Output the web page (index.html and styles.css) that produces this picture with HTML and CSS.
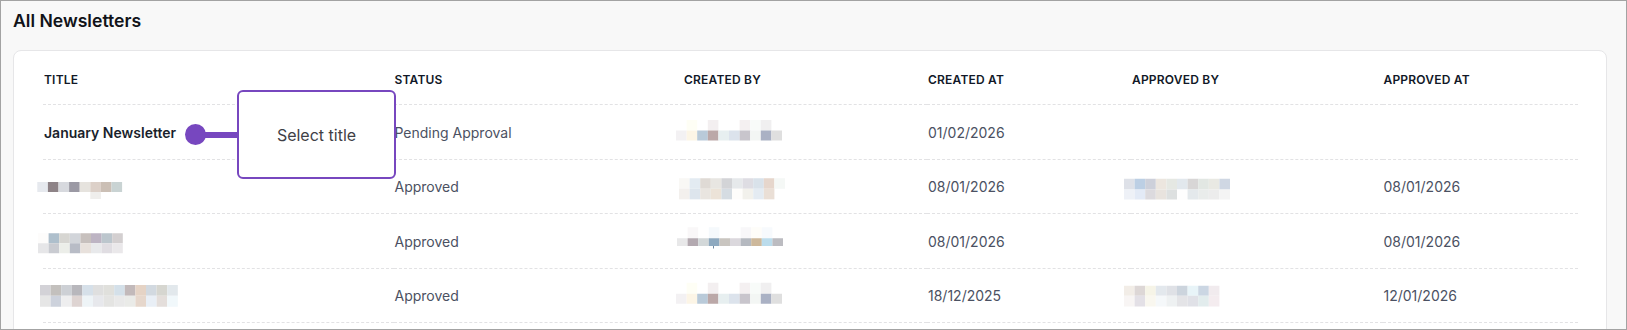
FILE: index.html
```html
<!DOCTYPE html>
<html lang="en">
<head>
<meta charset="utf-8">
<title>All Newsletters</title>
<link rel="stylesheet" href="styles.css">
</head>
<body>
<div class="frame">
  <h2 class="page-title">All Newsletters</h2>
  <section class="card">
    <table class="nl-table">
      <colgroup>
        <col class="col-title">
        <col class="col-status">
        <col class="col-created-by">
        <col class="col-created-at">
        <col class="col-approved-by">
        <col class="col-approved-at">
      </colgroup>
      <thead>
        <tr>
          <th>Title</th>
          <th>Status</th>
          <th>Created By</th>
          <th>Created At</th>
          <th>Approved By</th>
          <th>Approved At</th>
        </tr>
      </thead>
      <tbody>
        <tr>
          <td class="cell-title">January Newsletter</td>
          <td>Pending Approval</td>
          <td>
            <svg class="mosaic" width="115" height="30" viewBox="0 0 115 30" aria-hidden="true">
              <g>
                <rect x="11.6" y="2" width="10.6" height="10.5" fill="#fefef5"/>
                <rect x="32.8" y="2" width="10.6" height="10.5" fill="#f3eff0"/>
                <rect x="64.6" y="2" width="10.6" height="10.5" fill="#f4f0f1"/>
                <rect x="75.2" y="2" width="10.6" height="10.5" fill="#f8fbf9"/>
                <rect x="85.8" y="2" width="10.6" height="10.5" fill="#f0eff0"/>
              </g>
              <g>
                <rect x="1" y="12.5" width="10.6" height="10" fill="#f3f1f3"/>
                <rect x="11.6" y="12.5" width="10.6" height="10" fill="#fcf5e6"/>
                <rect x="22.2" y="12.5" width="10.6" height="10" fill="#b9cad9"/>
                <rect x="32.8" y="12.5" width="10.6" height="10" fill="#bba8a8"/>
                <rect x="43.4" y="12.5" width="10.6" height="10" fill="#e7eff0"/>
                <rect x="54" y="12.5" width="10.6" height="10" fill="#dce3ec"/>
                <rect x="64.6" y="12.5" width="10.6" height="10" fill="#c8c5cc"/>
                <rect x="75.2" y="12.5" width="10.6" height="10" fill="#f3f6f4"/>
                <rect x="85.8" y="12.5" width="10.6" height="10" fill="#aab1c4"/>
                <rect x="96.4" y="12.5" width="10.6" height="10" fill="#dfdfdf"/>
              </g>
            </svg>
          </td>
          <td>01/02/2026</td>
          <td></td>
          <td></td>
        </tr>
        <tr>
          <td>
            <svg class="mosaic" width="92" height="30" viewBox="0 0 92 30" aria-hidden="true">
              <rect x="2.3" y="10" width="10.6" height="10" fill="#e6e9ee"/>
              <rect x="12.9" y="10" width="10.6" height="10" fill="#8e8387"/>
              <rect x="23.5" y="10" width="10.6" height="10" fill="#d7d9de"/>
              <rect x="34.1" y="10" width="10.6" height="10" fill="#9b99a4"/>
              <rect x="44.7" y="10" width="10.6" height="10" fill="#e6e3de"/>
              <rect x="55.3" y="10" width="10.6" height="10" fill="#dcd0c8"/>
              <rect x="65.9" y="10" width="10.6" height="10" fill="#cbbfb5"/>
              <rect x="76.5" y="10" width="10.6" height="10" fill="#c9d3d3"/>
              <rect x="55.3" y="20" width="10.6" height="7" fill="#efeeec"/>
            </svg>
          </td>
          <td>Approved</td>
          <td>
            <svg class="mosaic" width="115" height="30" viewBox="0 0 115 30" aria-hidden="true">
              <g>
                <rect x="4" y="6.25" width="10.6" height="10.5" fill="#f9f8f5"/>
                <rect x="14.6" y="6.25" width="10.6" height="10.5" fill="#e3ebf2"/>
                <rect x="25.2" y="6.25" width="10.6" height="10.5" fill="#dfdad5"/>
                <rect x="35.8" y="6.25" width="10.6" height="10.5" fill="#e8e6e2"/>
                <rect x="46.4" y="6.25" width="10.6" height="10.5" fill="#d3d4d7"/>
                <rect x="57" y="6.25" width="10.6" height="10.5" fill="#e6e9eb"/>
                <rect x="67.6" y="6.25" width="10.6" height="10.5" fill="#dedde3"/>
                <rect x="78.2" y="6.25" width="10.6" height="10.5" fill="#d9e2ea"/>
                <rect x="88.8" y="6.25" width="10.6" height="10.5" fill="#e6d6cc"/>
                <rect x="99.4" y="6.25" width="10.6" height="10.5" fill="#f5f8f6"/>
              </g>
              <g>
                <rect x="4" y="16.75" width="10.6" height="10.6" fill="#f3f0ed"/>
                <rect x="14.6" y="16.75" width="10.6" height="10.6" fill="#dde5ed"/>
                <rect x="25.2" y="16.75" width="10.6" height="10.6" fill="#e9e5e0"/>
                <rect x="35.8" y="16.75" width="10.6" height="10.6" fill="#ece3d8"/>
                <rect x="46.4" y="16.75" width="10.6" height="10.6" fill="#d5dce2"/>
                <rect x="57" y="16.75" width="10.6" height="10.6" fill="#fefdfb"/>
                <rect x="67.6" y="16.75" width="10.6" height="10.6" fill="#f2f1ec"/>
                <rect x="78.2" y="16.75" width="10.6" height="10.6" fill="#e4ebf2"/>
                <rect x="88.8" y="16.75" width="10.6" height="10.6" fill="#eadfd6"/>
              </g>
            </svg>
          </td>
          <td>08/01/2026</td>
          <td>
            <svg class="mosaic" width="115" height="30" viewBox="0 0 115 30" aria-hidden="true">
              <g>
                <rect x="1" y="6.75" width="10.6" height="10.75" fill="#dee1e8"/>
                <rect x="11.6" y="6.75" width="10.6" height="10.75" fill="#bccfe4"/>
                <rect x="22.2" y="6.75" width="10.6" height="10.75" fill="#cdd0da"/>
                <rect x="32.8" y="6.75" width="10.6" height="10.75" fill="#ece6df"/>
                <rect x="43.4" y="6.75" width="10.6" height="10.75" fill="#e5e8e3"/>
                <rect x="54" y="6.75" width="10.6" height="10.75" fill="#e2e8ed"/>
                <rect x="64.6" y="6.75" width="10.6" height="10.75" fill="#d8d6d6"/>
                <rect x="75.2" y="6.75" width="10.6" height="10.75" fill="#e2e7e3"/>
                <rect x="85.8" y="6.75" width="10.6" height="10.75" fill="#e9e9e3"/>
                <rect x="96.4" y="6.75" width="10.6" height="10.75" fill="#cfd7e3"/>
              </g>
              <g>
                <rect x="1" y="17.5" width="10.6" height="10" fill="#eef1f7"/>
                <rect x="11.6" y="17.5" width="10.6" height="10" fill="#e3eaf6"/>
                <rect x="22.2" y="17.5" width="10.6" height="10" fill="#dcdade"/>
                <rect x="32.8" y="17.5" width="10.6" height="10" fill="#e8e3de"/>
                <rect x="43.4" y="17.5" width="10.6" height="10" fill="#dde0e0"/>
                <rect x="54" y="17.5" width="10.6" height="10" fill="#fefefe"/>
                <rect x="64.6" y="17.5" width="10.6" height="10" fill="#e4e9ec"/>
                <rect x="75.2" y="17.5" width="10.6" height="10" fill="#e9eceb"/>
                <rect x="85.8" y="17.5" width="10.6" height="10" fill="#ececec"/>
                <rect x="96.4" y="17.5" width="10.6" height="10" fill="#f4f4f4"/>
              </g>
            </svg>
          </td>
          <td>08/01/2026</td>
        </tr>
        <tr>
          <td>
            <svg class="mosaic" width="92" height="30" viewBox="0 0 92 30" aria-hidden="true">
              <g>
                <rect x="3" y="6.25" width="10.6" height="10" fill="#fdfcfb"/>
                <rect x="13.6" y="6.25" width="10.6" height="10" fill="#aebfcc"/>
                <rect x="24.2" y="6.25" width="10.6" height="10" fill="#d7d6d2"/>
                <rect x="34.8" y="6.25" width="10.6" height="10" fill="#d2d5da"/>
                <rect x="45.4" y="6.25" width="10.6" height="10" fill="#c7c0bd"/>
                <rect x="56" y="6.25" width="10.6" height="10" fill="#bdb4c3"/>
                <rect x="66.6" y="6.25" width="10.6" height="10" fill="#bcc6cd"/>
                <rect x="77.2" y="6.25" width="10.6" height="10" fill="#d3cfd0"/>
              </g>
              <g>
                <rect x="3" y="16.25" width="10.6" height="10" fill="#e6e6e8"/>
                <rect x="13.6" y="16.25" width="10.6" height="10" fill="#c9cbd1"/>
                <rect x="24.2" y="16.25" width="10.6" height="10" fill="#eceee9"/>
                <rect x="34.8" y="16.25" width="10.6" height="10" fill="#b8bcc6"/>
                <rect x="45.4" y="16.25" width="10.6" height="10" fill="#e8e1dc"/>
                <rect x="56" y="16.25" width="10.6" height="10" fill="#e8e9eb"/>
                <rect x="66.6" y="16.25" width="10.6" height="10" fill="#e0dde2"/>
                <rect x="77.2" y="16.25" width="10.6" height="10" fill="#eae8ea"/>
              </g>
            </svg>
          </td>
          <td>Approved</td>
          <td>
            <svg class="mosaic" width="115" height="30" viewBox="0 0 115 30" aria-hidden="true">
              <g>
                <rect x="12.6" y="0.25" width="10.6" height="11" fill="#f9f7f8"/>
                <rect x="33.8" y="0.25" width="10.6" height="11" fill="#f5f9fc"/>
                <rect x="65.6" y="0.25" width="10.6" height="11" fill="#f8f7f9"/>
                <rect x="76.2" y="0.25" width="10.6" height="11" fill="#fefdf9"/>
                <rect x="86.8" y="0.25" width="10.6" height="11" fill="#f7fafd"/>
              </g>
              <g>
                <rect x="2" y="11.25" width="10.6" height="7.75" fill="#e8e8e9"/>
                <rect x="12.6" y="11.25" width="10.6" height="7.75" fill="#b3a9b0"/>
                <rect x="23.2" y="11.25" width="10.6" height="7.75" fill="#d3d8d9"/>
                <rect x="33.8" y="11.25" width="10.6" height="7.75" fill="#8ea9bf"/>
                <rect x="44.4" y="11.25" width="10.6" height="7.75" fill="#c9c5c0"/>
                <rect x="55" y="11.25" width="10.6" height="7.75" fill="#dbd8dd"/>
                <rect x="65.6" y="11.25" width="10.6" height="7.75" fill="#b5b9c0"/>
                <rect x="76.2" y="11.25" width="10.6" height="7.75" fill="#cdb89b"/>
                <rect x="86.8" y="11.25" width="10.6" height="7.75" fill="#bbdcec"/>
                <rect x="97.4" y="11.25" width="10.6" height="7.75" fill="#bcbcc1"/>
                <rect x="38" y="19" width="1" height="2.5" fill="#6f8aa3"/>
              </g>
            </svg>
          </td>
          <td>08/01/2026</td>
          <td></td>
          <td>08/01/2026</td>
        </tr>
        <tr>
          <td>
            <svg class="mosaic" width="145" height="30" viewBox="0 0 145 30" aria-hidden="true">
              <g>
                <rect x="5" y="4" width="10.6" height="10.75" fill="#d3d2d7"/>
                <rect x="15.6" y="4" width="10.6" height="10.75" fill="#c3c0bd"/>
                <rect x="26.2" y="4" width="10.6" height="10.75" fill="#cdd0d5"/>
                <rect x="36.8" y="4" width="10.6" height="10.75" fill="#b8b7bc"/>
                <rect x="47.4" y="4" width="10.6" height="10.75" fill="#d6e0e9"/>
                <rect x="58" y="4" width="10.6" height="10.75" fill="#dfdfdf"/>
                <rect x="68.6" y="4" width="10.6" height="10.75" fill="#e0e0dc"/>
                <rect x="79.2" y="4" width="10.6" height="10.75" fill="#d4e0e9"/>
                <rect x="89.8" y="4" width="10.6" height="10.75" fill="#c2b9ba"/>
                <rect x="100.4" y="4" width="10.6" height="10.75" fill="#e5d3c5"/>
                <rect x="111" y="4" width="10.6" height="10.75" fill="#d2d9e0"/>
                <rect x="121.6" y="4" width="10.6" height="10.75" fill="#d6d6d0"/>
                <rect x="132.2" y="4" width="10.6" height="10.75" fill="#e2e8ec"/>
              </g>
              <g>
                <rect x="5" y="14.75" width="10.6" height="11" fill="#e6e6e6"/>
                <rect x="15.6" y="14.75" width="10.6" height="11" fill="#cdd2dc"/>
                <rect x="26.2" y="14.75" width="10.6" height="11" fill="#eeeeef"/>
                <rect x="36.8" y="14.75" width="10.6" height="11" fill="#ded4d2"/>
                <rect x="47.4" y="14.75" width="10.6" height="11" fill="#eef4f7"/>
                <rect x="58" y="14.75" width="10.6" height="11" fill="#e7e8ec"/>
                <rect x="68.6" y="14.75" width="10.6" height="11" fill="#e4e4e2"/>
                <rect x="79.2" y="14.75" width="10.6" height="11" fill="#e9e9e9"/>
                <rect x="89.8" y="14.75" width="10.6" height="11" fill="#eaebe8"/>
                <rect x="100.4" y="14.75" width="10.6" height="11" fill="#e6d7cc"/>
                <rect x="111" y="14.75" width="10.6" height="11" fill="#e9eff6"/>
                <rect x="121.6" y="14.75" width="10.6" height="11" fill="#e4dedb"/>
                <rect x="132.2" y="14.75" width="10.6" height="11" fill="#f1f8fb"/>
              </g>
            </svg>
          </td>
          <td>Approved</td>
          <td>
            <svg class="mosaic" width="115" height="30" viewBox="0 0 115 30" aria-hidden="true">
              <g>
                <rect x="11.6" y="1.75" width="10.6" height="11" fill="#fefef5"/>
                <rect x="32.8" y="1.75" width="10.6" height="11" fill="#f3eff0"/>
                <rect x="64.6" y="1.75" width="10.6" height="11" fill="#f4f0f1"/>
                <rect x="75.2" y="1.75" width="10.6" height="11" fill="#f8fbf9"/>
                <rect x="85.8" y="1.75" width="10.6" height="11" fill="#f0eff0"/>
              </g>
              <g>
                <rect x="1" y="12.75" width="10.6" height="10" fill="#f3f1f3"/>
                <rect x="11.6" y="12.75" width="10.6" height="10" fill="#fcf5e6"/>
                <rect x="22.2" y="12.75" width="10.6" height="10" fill="#b9cad9"/>
                <rect x="32.8" y="12.75" width="10.6" height="10" fill="#bba8a8"/>
                <rect x="43.4" y="12.75" width="10.6" height="10" fill="#e7eff0"/>
                <rect x="54" y="12.75" width="10.6" height="10" fill="#dce3ec"/>
                <rect x="64.6" y="12.75" width="10.6" height="10" fill="#c8c5cc"/>
                <rect x="75.2" y="12.75" width="10.6" height="10" fill="#f3f6f4"/>
                <rect x="85.8" y="12.75" width="10.6" height="10" fill="#aab1c4"/>
                <rect x="96.4" y="12.75" width="10.6" height="10" fill="#dfdfdf"/>
              </g>
            </svg>
          </td>
          <td>18/12/2025</td>
          <td>
            <svg class="mosaic" width="115" height="30" viewBox="0 0 115 30" aria-hidden="true">
              <g>
                <rect x="1" y="4.75" width="10.6" height="10" fill="#f2ede7"/>
                <rect x="11.6" y="4.75" width="10.6" height="10" fill="#ddd7d6"/>
                <rect x="22.2" y="4.75" width="10.6" height="10" fill="#f6f4e7"/>
                <rect x="32.8" y="4.75" width="10.6" height="10" fill="#e3e8ed"/>
                <rect x="43.4" y="4.75" width="10.6" height="10" fill="#dfe1e6"/>
                <rect x="54" y="4.75" width="10.6" height="10" fill="#ccd4dd"/>
                <rect x="64.6" y="4.75" width="10.6" height="10" fill="#e8f4f8"/>
                <rect x="75.2" y="4.75" width="10.6" height="10" fill="#cbd6e3"/>
                <rect x="85.8" y="4.75" width="10.6" height="10" fill="#f1ebee"/>
              </g>
              <g>
                <rect x="1" y="14.75" width="10.6" height="10.75" fill="#f8f5f4"/>
                <rect x="11.6" y="14.75" width="10.6" height="10.75" fill="#e3e0e6"/>
                <rect x="22.2" y="14.75" width="10.6" height="10.75" fill="#f9f7ef"/>
                <rect x="32.8" y="14.75" width="10.6" height="10.75" fill="#f5f8fa"/>
                <rect x="43.4" y="14.75" width="10.6" height="10.75" fill="#eef1f2"/>
                <rect x="54" y="14.75" width="10.6" height="10.75" fill="#e4e4e7"/>
                <rect x="64.6" y="14.75" width="10.6" height="10.75" fill="#e0e1e7"/>
                <rect x="75.2" y="14.75" width="10.6" height="10.75" fill="#e2eced"/>
                <rect x="85.8" y="14.75" width="10.6" height="10.75" fill="#f4ecef"/>
              </g>
            </svg>
          </td>
          <td>12/01/2026</td>
        </tr>
      </tbody>
    </table>

    <div class="callout">
      <span class="callout-dot"></span>
      <span class="callout-line"></span>
      <div class="callout-box">Select title</div>
    </div>
  </section>
</div>
</body>
</html>
```

FILE: styles.css
```css
* {
  box-sizing: border-box;
}

html,
body {
  margin: 0;
  padding: 0;
}

body {
  font-family: Inter, "Liberation Sans", sans-serif;
  background: #f8f8f8;
}

.frame {
  width: 1627px;
  height: 330px;
  border: 1px solid #a3a3a3;
  background: #f8f8f8;
  padding: 7.5px 19px 0 12px;
  overflow: hidden;
}

.page-title {
  margin: 0 0 17.5px;
  font-size: 17.6px;
  font-weight: 600;
  line-height: 24px;
  color: #111318;
}

.card {
  position: relative;
  background: #ffffff;
  border: 1px solid #e6e6e8;
  border-radius: 8px;
  padding: 21px 28px 24px 29px;
}

.nl-table {
  width: 100%;
  table-layout: fixed;
  border-collapse: separate;
  border-spacing: 0;
}

.col-title { width: 350.5px; }
.col-status { width: 289.5px; }
.col-created-by { width: 244px; }
.col-created-at { width: 204px; }
.col-approved-by { width: 251.5px; }
.col-approved-at { width: 195.5px; }

.nl-table th {
  text-align: left;
  font-size: 12px;
  font-weight: 600;
  letter-spacing: 0.2px;
  text-transform: uppercase;
  line-height: 16px;
  padding: 0 0 16px 1px;
  color: #111827;
  border-bottom: 1px dashed #e2e2e4;
}

.nl-table td {
  font-size: 14px;
  line-height: 20px;
  padding: 17.5px 0 16.5px 1px;
  color: #4b5162;
  border-bottom: 1px dashed #e2e2e4;
  vertical-align: middle;
  white-space: nowrap;
}

.nl-table tbody tr:nth-child(even) td {
  padding-top: 17px;
  padding-bottom: 16px;
}

.nl-table td.cell-title {
  font-weight: 600;
  color: #1a1f2c;
}

.mosaic {
  display: block;
  margin: -5px 0 -5px -9px;
}

.callout {
  position: absolute;
  left: 170.5px;
  top: 39px;
  height: 89px;
  display: flex;
  align-items: center;
}

.callout-dot {
  flex: none;
  width: 21px;
  height: 21px;
  border-radius: 50%;
  background: #7747bf;
}

.callout-line {
  flex: none;
  width: 32px;
  height: 6px;
  margin-left: -0.5px;
  background: #7747bf;
}

.callout-box {
  flex: none;
  width: 159px;
  height: 89px;
  border: 2px solid #7747bf;
  border-radius: 6px;
  background: #ffffff;
  display: flex;
  align-items: center;
  justify-content: center;
  font-size: 16px;
  line-height: 20px;
  color: #3f3f46;
}
```
